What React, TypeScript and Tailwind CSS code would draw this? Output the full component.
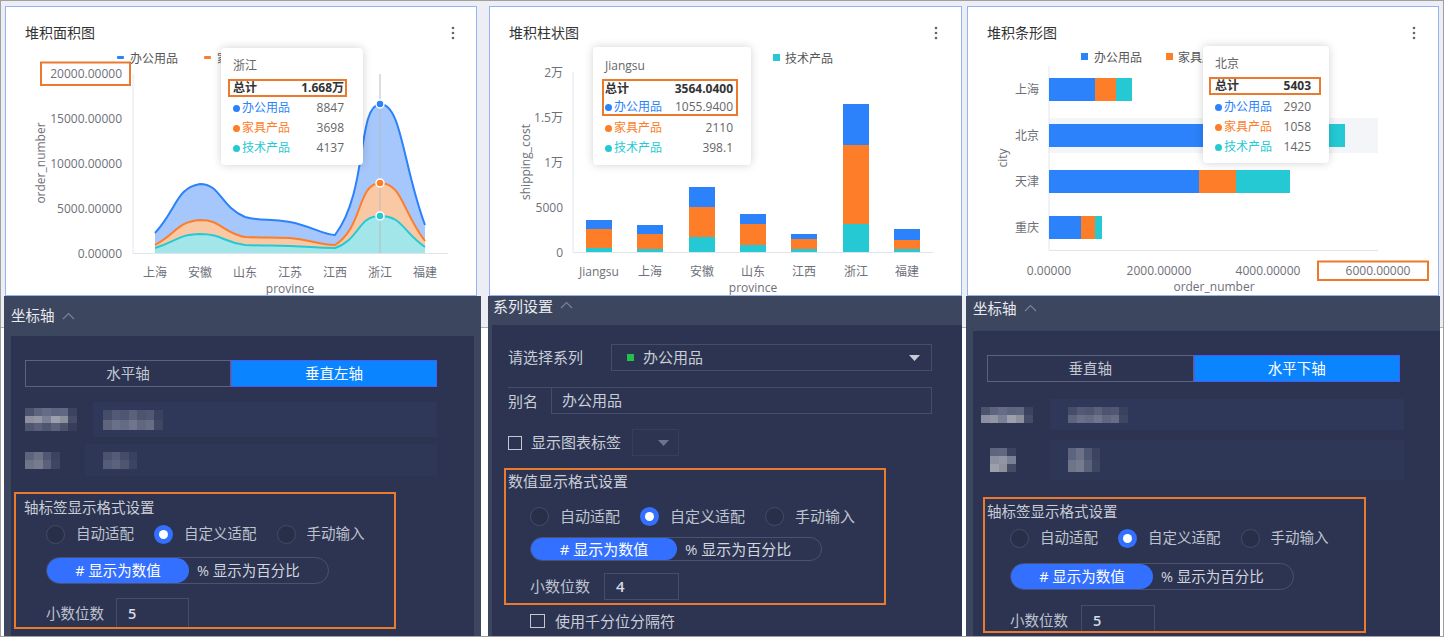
import React from "react";

type Pt = [number, number];

// echarts-like smoothing: control points clamped between neighbours
function smoothPath(pts: Pt[], s = 0.5) {
  const n = pts.length;
  const cn: Pt[] = [];
  const cp: Pt[] = [];
  const clamp = (v: number, a: number, b: number) => Math.min(Math.max(v, Math.min(a, b)), Math.max(a, b));
  for (let i = 0; i < n; i++) {
    const [x, y] = pts[i];
    const [px, py] = pts[i - 1] || pts[i];
    const [nx, ny] = pts[i + 1] || pts[i];
    const vx = nx - px;
    const vy = ny - py;
    const lp = Math.hypot(x - px, y - py);
    const ln = Math.hypot(nx - x, ny - y);
    const r = ln / (ln + lp);
    cn[i] = [clamp(x + vx * s * r, x, nx), clamp(y + vy * s * r, y, ny)];
    cp[i] = [clamp(x - vx * s * (1 - r), x, px), clamp(y - vy * s * (1 - r), y, py)];
  }
  let d = `M${pts[0][0]},${pts[0][1]}`;
  for (let i = 0; i < n - 1; i++) {
    d += ` C${cn[i][0]},${cn[i][1]} ${cp[i + 1][0]},${cp[i + 1][1]} ${pts[i + 1][0]},${pts[i + 1][1]}`;
  }
  return d;
}

const BLUE = "#2b82fb";
const ORANGE = "#fd7d28";
const CYAN = "#24c9d4";
const AXIS = "#6e7079";

function Dots() {
  return (
    <svg width="4" height="14" viewBox="0 0 4 14" className="mt-[1px]">
      <circle cx="2" cy="2" r="1.3" fill="#666" />
      <circle cx="2" cy="7" r="1.3" fill="#666" />
      <circle cx="2" cy="12" r="1.3" fill="#666" />
    </svg>
  );
}

function Chevron({ cls }: { cls: string }) {
  return (
    <svg width="13" height="8" viewBox="0 0 13 8" className={cls}>
      <polyline points="1,7 6.5,1.5 12,7" fill="none" stroke="#7b8297" strokeWidth="1.2" />
    </svg>
  );
}

function Caret({ color, cls }: { color: string; cls?: string }) {
  return (
    <svg width="11" height="6" viewBox="0 0 11 6" className={cls}>
      <polygon points="0,0 11,0 5.5,6" fill={color} />
    </svg>
  );
}

function CardHead({ title, cls }: { title: string; cls: string }) {
  return (
    <div className={`flex items-start justify-between h-[44px] pt-[18px] pl-[19px] ${cls}`}>
      <span className="text-[14px] leading-[16px] text-[#333]">{title}</span>
      <Dots />
    </div>
  );
}

function TipRow({ name, value, color, cls }: { name: string; value: string; color: string; cls: string }) {
  return (
    <div className={`flex items-center justify-between text-[12px] ${cls}`}>
      <span className="flex items-center">
        <span className="w-[7px] h-[7px] rounded-full mr-[2px]" style={{ background: color }} />
        <span style={{ color }}>{name}</span>
      </span>
      <span className="text-[#666]">{value}</span>
    </div>
  );
}

function AreaChart() {
  const X = [155, 200, 245, 290, 335, 380, 425];
  const cats = ["上海", "安徽", "山东", "江苏", "江西", "浙江", "福建"];
  const series = [
    { ys: [233, 184, 217, 222, 235, 104, 225], line: BLUE, fill: "#a6c7fc" },
    { ys: [245, 220, 237, 238, 245, 183, 241], line: ORANGE, fill: "#f9c8a5" },
    { ys: [248, 234, 245, 246, 248, 216, 247], line: CYAN, fill: "#a3e6ea" },
  ];
  const paths = series.map((s) => smoothPath(s.ys.map((y, i) => [X[i], y] as Pt)));
  return (
    <svg width="470" height="244" viewBox="6 51 470 244" className="block">
      <rect x="117" y="56" width="7" height="3" rx="1" fill={BLUE} />
      <text x="130" y="58" fontSize="12" fill="#555" dominantBaseline="central">办公用品</text>
      <rect x="204" y="56" width="7" height="3" rx="1" fill={ORANGE} />
      <text x="217" y="58" fontSize="12" fill="#555" dominantBaseline="central">家具产品</text>
      {["20000.00000", "15000.00000", "10000.00000", "5000.00000", "0.00000"].map((t, i) => (
        <text key={t} x="122" y={73 + i * 45} fontSize="12" fill={AXIS} textAnchor="end" dominantBaseline="central">{t}</text>
      ))}
      <rect x="41" y="62.5" width="89" height="22.5" fill="none" stroke="#ec7a2d" strokeWidth="2" />
      <line x1="133" y1="74" x2="133" y2="253" stroke="#e0e6f1" />
      {paths.map((d, i) => (
        <path key={i} d={`${d} L425,253 L155,253 Z`} fill={series[i].fill} />
      ))}
      <line x1="133" y1="253.5" x2="448" y2="253.5" stroke="#dfe3ea" />
      <line x1="380" y1="74" x2="380" y2="253" stroke="#bbbbbb" />
      {paths.map((d, i) => (
        <path key={i} d={d} fill="none" stroke={series[i].line} strokeWidth="2" />
      ))}
      {series.map((s, i) => (
        <circle key={i} cx="380" cy={s.ys[5]} r="4" fill={s.line} stroke="#fff" strokeWidth="1.5" />
      ))}
      {cats.map((c, i) => (
        <text key={c} x={X[i]} y="272" fontSize="12" fill={AXIS} textAnchor="middle" dominantBaseline="central">{c}</text>
      ))}
      <text x="290" y="288" fontSize="12" fill={AXIS} textAnchor="middle" dominantBaseline="central">province</text>
      <text x="40" y="163" fontSize="12" fill={AXIS} textAnchor="middle" dominantBaseline="central" transform="rotate(-90 40 163)">order_number</text>
    </svg>
  );
}

function BarChart() {
  const X = [599, 650, 702, 753, 804, 856, 907];
  const cats = ["Jiangsu", "上海", "安徽", "山东", "江西", "浙江", "福建"];
  const bars = [
    [248, 229, 220],
    [249, 234, 225],
    [237, 207, 187],
    [245, 224, 214],
    [249, 239, 234],
    [224, 145, 104],
    [249, 240, 229],
  ];
  return (
    <svg width="471" height="244" viewBox="490 51 471 244" className="block">
      <rect x="773" y="54" width="7" height="7" fill={CYAN} />
      <text x="785" y="58" fontSize="12" fill="#555" dominantBaseline="central">技术产品</text>
      {["2万", "1.5万", "1万", "5000", "0"].map((t, i) => (
        <text key={t} x="563" y={72 + i * 45} fontSize="12" fill={AXIS} textAnchor="end" dominantBaseline="central">{t}</text>
      ))}
      <line x1="573" y1="72" x2="573" y2="252" stroke="#e0e6f1" />
      <line x1="573" y1="252.5" x2="933" y2="252.5" stroke="#dfe3ea" />
      {bars.map(([c, o, b], i) => (
        <g key={i}>
          <rect x={X[i] - 13} y={b} width="26" height={o - b} fill={BLUE} />
          <rect x={X[i] - 13} y={o} width="26" height={c - o} fill={ORANGE} />
          <rect x={X[i] - 13} y={c} width="26" height={252 - c} fill={CYAN} />
        </g>
      ))}
      {cats.map((c, i) => (
        <text key={c} x={X[i]} y="271" fontSize="12" fill={AXIS} textAnchor="middle" dominantBaseline="central">{c}</text>
      ))}
      <text x="753" y="287" fontSize="12" fill={AXIS} textAnchor="middle" dominantBaseline="central">province</text>
      <text x="525" y="162" fontSize="12" fill={AXIS} textAnchor="middle" dominantBaseline="central" transform="rotate(-90 525 162)">shipping_cost</text>
    </svg>
  );
}

function HBarChart() {
  const Y = [78, 124, 170, 216];
  const cats = ["上海", "北京", "天津", "重庆"];
  const ends = [
    [1095, 1116, 1132],
    [1209, 1267, 1345],
    [1199, 1236, 1290],
    [1081, 1095, 1102],
  ];
  const ticks = [
    ["0.00000", 1049],
    ["2000.00000", 1159],
    ["4000.00000", 1268],
    ["6000.00000", 1378],
  ] as const;
  return (
    <svg width="470" height="244" viewBox="968 51 470 244" className="block">
      <rect x="1081" y="53" width="7" height="7" fill={BLUE} />
      <text x="1094" y="57" fontSize="12" fill="#555" dominantBaseline="central">办公用品</text>
      <rect x="1166" y="53" width="7" height="7" fill={ORANGE} />
      <text x="1178" y="57" fontSize="12" fill="#555" dominantBaseline="central">家具产品</text>
      <rect x="1049" y="118" width="329" height="35" fill="#f3f5f9" />
      <line x1="1049" y1="66" x2="1049" y2="250" stroke="#e0e6f1" />
      <line x1="1049" y1="250.5" x2="1378" y2="250.5" stroke="#dfe3ea" />
      {ends.map(([b, o, c], i) => (
        <g key={i}>
          <rect x="1049" y={Y[i]} width={b - 1049} height="23" fill={BLUE} />
          <rect x={b} y={Y[i]} width={o - b} height="23" fill={ORANGE} />
          <rect x={o} y={Y[i]} width={c - o} height="23" fill={CYAN} />
        </g>
      ))}
      {cats.map((c, i) => (
        <text key={c} x="1039" y={Y[i] + 11} fontSize="12" fill={AXIS} textAnchor="end" dominantBaseline="central">{c}</text>
      ))}
      {ticks.map(([t, x]) => (
        <text key={t} x={x} y="270" fontSize="12" fill={AXIS} textAnchor="middle" dominantBaseline="central">{t}</text>
      ))}
      <rect x="1318" y="261.5" width="110" height="18.5" fill="none" stroke="#ec7a2d" strokeWidth="2" />
      <text x="1214" y="286" fontSize="12" fill={AXIS} textAnchor="middle" dominantBaseline="central">order_number</text>
      <text x="1002" y="158" fontSize="12" fill={AXIS} textAnchor="middle" dominantBaseline="central" transform="rotate(-90 1002 158)">city</text>
    </svg>
  );
}

const tipCls = "absolute bg-white rounded-[4px] shadow-[0_0_10px_rgba(0,0,0,0.18)] text-[12px]";

function Tip1() {
  return (
    <div className={`${tipCls} left-[215px] top-[41px] w-[142px] pt-[8px] pb-[7px] pl-[12px] pr-[19px]`}>
      <div className="h-[20px] leading-[20px] text-[#666]">浙江</div>
      <div className="mt-[3px] -ml-[5px] -mr-[3px] pl-[3px] pr-[1px] h-[18px] border-2 border-[#ec7a2d] flex items-center justify-between font-bold text-[#333]">
        <span>总计</span>
        <span>1.668万</span>
      </div>
      <TipRow name="办公用品" value="8847" color={BLUE} cls="mt-[1px] h-[20px]" />
      <TipRow name="家具产品" value="3698" color={ORANGE} cls="h-[20px]" />
      <TipRow name="技术产品" value="4137" color={CYAN} cls="h-[20px]" />
    </div>
  );
}

function Tip2() {
  return (
    <div className={`${tipCls} left-[103px] top-[40px] w-[158px] pt-[9px] pb-[7px] pl-[12px] pr-[18px]`}>
      <div className="h-[20px] leading-[20px] text-[#666]">Jiangsu</div>
      <div className="mt-[3px] -ml-[3px] -mr-[5px] pl-[1px] pr-[3px] border-2 border-[#ec7a2d]">
        <div className="h-[16px] flex items-center justify-between font-bold text-[#333]">
          <span>总计</span>
          <span>3564.0400</span>
        </div>
        <TipRow name="办公用品" value="1055.9400" color={BLUE} cls="h-[17px] pt-[3px]" />
      </div>
      <TipRow name="家具产品" value="2110" color={ORANGE} cls="mt-[2px] h-[20px]" />
      <TipRow name="技术产品" value="398.1" color={CYAN} cls="h-[20px]" />
    </div>
  );
}

function Tip3() {
  return (
    <div className={`${tipCls} left-[235px] top-[39px] w-[126px] pt-[8px] pb-[6px] pl-[12px] pr-[18px]`}>
      <div className="h-[20px] leading-[20px] text-[#666]">北京</div>
      <div className="mt-[3px] -ml-[6px] -mr-[10px] pl-[4px] pr-[8px] h-[18px] border-2 border-[#ec7a2d] flex items-center justify-between font-bold text-[#333]">
        <span>总计</span>
        <span>5403</span>
      </div>
      <TipRow name="办公用品" value="2920" color={BLUE} cls="mt-[2px] h-[20px]" />
      <TipRow name="家具产品" value="1058" color={ORANGE} cls="h-[20px]" />
      <TipRow name="技术产品" value="1425" color={CYAN} cls="h-[20px]" />
    </div>
  );
}

function Radio({ on, cls = "" }: { on?: boolean; cls?: string }) {
  return on ? (
    <span className={`w-[19px] h-[19px] shrink-0 rounded-full bg-[#3370ff] flex items-center justify-center ${cls}`}>
      <span className="w-[9px] h-[9px] rounded-full bg-white" />
    </span>
  ) : (
    <span className={`w-[19px] h-[19px] shrink-0 rounded-full border border-[#434b66] bg-[#283049] ${cls}`} />
  );
}

type FB = {
  box: string;
  title: string;
  titleCls: string;
  radios: string;
  seg: string;
  active: string;
  dec: string;
  input: string;
  value: string;
};

function FormatBox(p: FB) {
  return (
    <div className={`border-2 border-[#ec7a2d] overflow-hidden ${p.box}`}>
      <div className={`leading-[20px] text-[#c9cdd6] ${p.titleCls}`}>{p.title}</div>
      <div className={`flex items-center h-[20px] text-[#bfc3cd] ${p.radios}`}>
        <Radio />
        <span className="ml-[11px]">自动适配</span>
        <Radio on cls="ml-[20px]" />
        <span className="ml-[11px]">自定义适配</span>
        <Radio cls="ml-[20px]" />
        <span className="ml-[11px]">手动输入</span>
      </div>
      <div className={`flex rounded-full border border-[#4a5270] ${p.seg}`}>
        <div className={`h-full rounded-full bg-[#3370ff] text-white flex items-center justify-center ${p.active}`}># 显示为数值</div>
        <div className="flex items-center pl-[8px] text-[#d3d6de]">% 显示为百分比</div>
      </div>
      <div className={`flex items-center ${p.dec}`}>
        <span className="text-[#bfc3cd]">小数位数</span>
        <div className={`border border-[#454d6a] flex items-center pl-[11px] font-semibold text-[#d8dbe2] ${p.input}`}>{p.value}</div>
      </div>
    </div>
  );
}

function Tabs({ left, right, cls }: { left: string; right: string; cls: string }) {
  return (
    <div className={`flex h-[27px] ${cls}`}>
      <div className="flex-1 border border-[#5a627c] flex items-center justify-center text-[#c3c7d1]">{left}</div>
      <div className="flex-1 bg-[#0a84ff] border border-[#4b5cf5] flex items-center justify-center text-white">{right}</div>
    </div>
  );
}

function Mosaic({ cls, cells }: { cls: string; cells: string[] }) {
  return (
    <div className={`grid ${cls}`}>
      {cells.map((c, i) => (
        <div key={i} className={c} />
      ))}
    </div>
  );
}

const m1 = [
  "bg-[#4b536d]", "bg-[#5c6480]", "bg-[#666c85]", "bg-[#5d6580]", "bg-[#606780]", "bg-[#3b4360]",
  "bg-[#8c90a0]", "bg-[#9296a4]", "bg-[#7a8096]", "bg-[#9da0ac]", "bg-[#8d919c]", "bg-[#454c66]",
  "bg-[#4e5670]", "bg-[#5a6079]", "bg-[#4d5570]", "bg-[#5b6279]", "bg-[#4b536b]", "bg-[#363e5a]",
];
const m2 = [
  "bg-[#454d69]", "bg-[#525a75]", "bg-[#4e5672]", "bg-[#5a6179]", "bg-[#4c5470]", "bg-[#505873]", "bg-[#3a4260]",
  "bg-[#5d647c]", "bg-[#6a7088]", "bg-[#646b84]", "bg-[#6f758b]", "bg-[#60677f]", "bg-[#676d85]", "bg-[#3f4763]",
];
const m3 = [
  "bg-[#5d6480]", "bg-[#6c7187]", "bg-[#4f5772]", "bg-[#3b4360]",
  "bg-[#6f7488]", "bg-[#777b8e]", "bg-[#5a627b]", "bg-[#3e4662]",
];
const m4 = [
  "bg-[#4a5270]", "bg-[#535b76]", "bg-[#444c69]", "bg-[#39415e]",
  "bg-[#555c77]", "bg-[#5b627b]", "bg-[#4d5571]", "bg-[#3c4461]",
];

function Gap({ cls }: { cls: string }) {
  return (
    <div className={`flex flex-col shrink-0 ${cls}`}>
      <div className="h-[326px] bg-[#eceef3]" />
      <div className="h-[1px] bg-[#aeb0b4]" />
      <div className="flex-1 bg-white" />
    </div>
  );
}

export default function App() {
  return (
    <div className="font-['Open_Sans','Noto_Sans_CJK_SC',sans-serif] w-[1444px] h-[637px] overflow-hidden bg-white border border-[#a0a0a0] flex">
      <Gap cls="w-[3px]" />

      {/* column 1 */}
      <div className="w-[477px] shrink-0 flex flex-col">
        <div className="h-[295px] shrink-0 bg-[#eceef3] pt-[5px] pl-[1px]">
          <div className="relative w-[472px] h-[290px] bg-white border border-[#93b3f2]">
            <CardHead title="堆积面积图" cls="pr-[21px]" />
            <AreaChart />
            <Tip1 />
          </div>
        </div>
        <div className="flex-1 flex flex-col bg-[#3d465f] overflow-hidden">
          <div className="h-[40px] shrink-0 flex items-center pl-[7px] text-[14.5px] text-[#e8eaf0]">
            <span>坐标轴</span>
            <Chevron cls="ml-[7px]" />
          </div>
          <div className="flex-1 mx-[7px] bg-[#2c3452] pt-[24px] text-[14.5px]">
            <Tabs left="水平轴" right="垂直左轴" cls="ml-[14px] w-[412px]" />
            <div className="mt-[15px] flex items-center h-[35px]">
              <Mosaic cls="ml-[14px] w-[52px] h-[23px] grid-cols-6 grid-rows-3" cells={m1} />
              <div className="ml-[16px] w-[344px] h-[35px] bg-[#303859] flex items-center pl-[10px]">
                <Mosaic cls="w-[60px] h-[20px] grid-cols-7 grid-rows-2" cells={m2} />
              </div>
            </div>
            <div className="mt-[7px] flex items-center h-[32px]">
              <Mosaic cls="ml-[14px] w-[35px] h-[17px] grid-cols-4 grid-rows-2" cells={m3} />
              <div className="ml-[25px] w-[352px] h-[32px] bg-[#2f3757] flex items-center pl-[18px]">
                <Mosaic cls="w-[34px] h-[17px] grid-cols-4 grid-rows-2" cells={m4} />
              </div>
            </div>
            <FormatBox
              box="mt-[16px] ml-[3px] w-[382px] h-[137px]"
              title="轴标签显示格式设置"
              titleCls="pt-[4px] pl-[8px]"
              radios="mt-[6px] pl-[30px]"
              seg="mt-[13px] ml-[30px] w-[283px] h-[27px]"
              active="w-[142px]"
              dec="mt-[14px] pl-[30px]"
              input="ml-[12px] w-[73px] h-[31px]"
              value="5"
            />
          </div>
        </div>
      </div>

      <Gap cls="w-[7px]" />

      {/* column 2 */}
      <div className="w-[474px] shrink-0 flex flex-col">
        <div className="h-[295px] shrink-0 bg-[#eceef3] pt-[5px] pl-[1px]">
          <div className="relative w-[473px] h-[290px] bg-white border border-[#93b3f2]">
            <CardHead title="堆积柱状图" cls="pr-[23px]" />
            <BarChart />
            <Tip2 />
          </div>
        </div>
        <div className="flex-1 flex flex-col bg-[#3d465f] overflow-hidden">
          <div className="h-[29px] shrink-0 flex items-start pl-[5px] text-[15px] leading-[20px] text-[#e8eaf0]">
            <span>系列设置</span>
            <Chevron cls="ml-[7px] mt-[5px]" />
          </div>
          <div className="flex-1 ml-[4px] bg-[#2c3452] pt-[19px] text-[15px] text-[#c9cdd6]">
            <div className="flex items-center h-[27px] pl-[16px]">
              <span className="w-[103px]">请选择系列</span>
              <div className="w-[321px] h-[27px] border border-[#454d6a] flex items-center pl-[15px] pr-[11px]">
                <span className="w-[7px] h-[7px] bg-[#22c04b]" />
                <span className="ml-[9px]">办公用品</span>
                <Caret color="#c8ccd6" cls="ml-auto" />
              </div>
            </div>
            <div className="mt-[16px] flex h-[27px] ml-[16px] w-[424px]">
              <span className="w-[43px] border-t border-[#454d6a] flex items-center">别名</span>
              <div className="flex-1 border border-[#454d6a] flex items-center pl-[10px]">办公用品</div>
            </div>
            <div className="mt-[15px] flex items-center h-[27px] pl-[16px]">
              <span className="w-[14px] h-[14px] border border-[#c3c7d0]" />
              <span className="ml-[9px]">显示图表标签</span>
              <div className="ml-[11px] w-[47px] h-[27px] border border-[#363e5c] flex items-center pl-[25px]">
                <Caret color="#6b7390" />
              </div>
            </div>
            <FormatBox
              box="mt-[12px] ml-[12px] w-[382px] h-[137px]"
              title="数值显示格式设置"
              titleCls="pt-[1px] pl-[2px]"
              radios="mt-[15px] pl-[24px]"
              seg="mt-[11px] ml-[24px] w-[292px] h-[24px]"
              active="w-[146px]"
              dec="mt-[12px] pl-[24px]"
              input="ml-[14px] w-[75px] h-[27px]"
              value="4"
            />
            <div className="mt-[9px] flex items-center pl-[38px] h-[14px]">
              <span className="w-[15px] h-[14px] border border-[#c3c7d0]" />
              <span className="ml-[10px]">使用千分位分隔符</span>
            </div>
          </div>
        </div>
      </div>

      <Gap cls="w-[4px]" />

      {/* column 3 */}
      <div className="w-[474px] shrink-0 flex flex-col">
        <div className="h-[295px] shrink-0 bg-[#eceef3] pt-[5px] pl-[1px]">
          <div className="relative w-[472px] h-[290px] bg-white border border-[#93b3f2]">
            <CardHead title="堆积条形图" cls="pr-[22px]" />
            <HBarChart />
            <Tip3 />
          </div>
        </div>
        <div className="flex-1 flex flex-col bg-[#3d465f] overflow-hidden">
          <div className="h-[35px] shrink-0 flex items-start pt-[3px] pl-[7px] text-[14.5px] leading-[20px] text-[#e8eaf0]">
            <span>坐标轴</span>
            <Chevron cls="ml-[7px] mt-[5px]" />
          </div>
          <div className="flex-1 ml-[7px] bg-[#2c3452] pt-[24px] text-[14.5px]">
            <Tabs left="垂直轴" right="水平下轴" cls="ml-[14px] w-[413px]" />
            <div className="mt-[17px] flex items-center h-[31px]">
              <Mosaic cls="ml-[8px] w-[52px] h-[16px] grid-cols-6 grid-rows-2" cells={m1.slice(0, 12)} />
              <div className="ml-[17px] w-[354px] h-[31px] bg-[#303859] flex items-center pl-[18px]">
                <Mosaic cls="w-[60px] h-[16px] grid-cols-7 grid-rows-2" cells={m2} />
              </div>
            </div>
            <div className="mt-[10px] flex items-center h-[40px]">
              <Mosaic cls="ml-[17px] w-[26px] h-[24px] grid-cols-3 grid-rows-3" cells={m1.slice(3, 12)} />
              <div className="ml-[34px] w-[354px] h-[40px] bg-[#2f3757] flex items-center pl-[18px]">
                <Mosaic cls="w-[32px] h-[24px] grid-cols-4 grid-rows-2" cells={m3} />
              </div>
            </div>
            <FormatBox
              box="mt-[17px] ml-[10px] w-[383px] h-[136px]"
              title="轴标签显示格式设置"
              titleCls="pt-[3px] pl-[2px]"
              radios="mt-[6px] pl-[25px]"
              seg="mt-[15px] ml-[25px] w-[284px] h-[27px]"
              active="w-[142px]"
              dec="mt-[15px] pl-[25px]"
              input="ml-[13px] w-[74px] h-[31px]"
              value="5"
            />
          </div>
        </div>
      </div>

      <Gap cls="w-[3px]" />
    </div>
  );
}
